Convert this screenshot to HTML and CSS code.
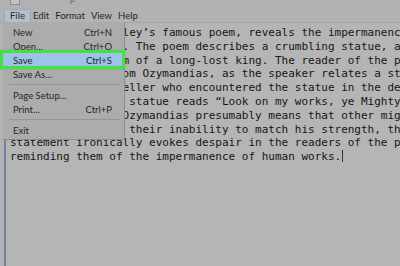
FILE: index.html
```html
<!DOCTYPE html>
<html lang="en">
<head>
    <meta charset="UTF-8">
    <title>Notepad - File menu</title>
    <link rel="stylesheet" href="styles.css">
</head>
<body>

<div class="window">
    <!-- title bar (mostly cropped) -->
    <div class="titlebar">
        <span class="app-icon"></span>
        <span class="title-text">p</span>
    </div>

    <!-- menu bar -->
    <nav class="menubar">
        <span class="menu-item active">File</span>
        <span class="menu-item">Edit</span>
        <span class="menu-item">Format</span>
        <span class="menu-item">View</span>
        <span class="menu-item">Help</span>
    </nav>

    <!-- editor -->
    <div class="editor">
<pre class="doc">Percy Bysshe Shelley’s famous poem, reveals the impermanence of
of power and fame. The poem describes a crumbling statue, a relic
carved in the form of a long-lost king. The reader of the poem
learns of this from Ozymandias, as the speaker relates a story
story from a traveller who encountered the statue in the desert.
sert. This broken statue reads “Look on my works, ye Mighty, and
and despair!” So Ozymandias presumably means that other mighty
hty kings weep at their inability to match his strength, though this
statement ironically evokes despair in the readers of the poem,
reminding them of the impermanence of human works.<span class="caret"></span></pre>
    </div>

    <!-- open dropdown -->
    <div class="dropdown">
        <div class="dd-item"><span>New</span><span>Ctrl+N</span></div>
        <div class="dd-item"><span>Open...</span><span>Ctrl+O</span></div>
        <div class="dd-item selected"><span>Save</span><span>Ctrl+S</span></div>
        <div class="dd-item"><span>Save As...</span><span></span></div>
        <div class="dd-sep"></div>
        <div class="dd-item"><span>Page Setup...</span><span></span></div>
        <div class="dd-item"><span>Print...</span><span>Ctrl+P</span></div>
        <div class="dd-sep"></div>
        <div class="dd-item"><span>Exit</span><span></span></div>
    </div>
</div>

</body>
</html>
```

FILE: styles.css
```css
/* --- base --- */
:root {
    --bg-color: #b3b3b3;
    --editor-bg: #b5b5b5;
    --menu-bg: #acacac;
    --text-color: #161616;
    --menu-text: #262626;
}

body {
    margin: 0;
    width: 400px;
    height: 266px;
    overflow: hidden;
    background-color: var(--bg-color);
    font-family: Lato, "Open Sans", sans-serif;
}

.window {
    position: relative;
    height: 266px;
    display: flex;
    flex-direction: column;
}

/* --- title bar --- */
.titlebar {
    height: 9px;
    display: flex;
    align-items: flex-start;
    background-color: #b1b1b1;
    overflow: hidden;
}
.app-icon {
    width: 8px;
    height: 4px;
    margin-left: 10px;
    border: 1px solid #8c8c8c;
    border-top: none;
    background-color: #c2c2c2;
}
.title-text {
    margin: -6px 0 0 50px;
    font-size: 9px;
    line-height: 10px;
    color: #666;
}

/* --- menu bar --- */
.menubar {
    height: 13px;
    display: flex;
    align-items: center;
    padding-left: 4px;
    font-size: 9.5px;
    color: var(--menu-text);
    background-color: #b2b2b2;
    border-bottom: 1px solid #a4a4a4;
}
.menu-item {
    padding: 0 3px;
    line-height: 12px;
}
.menu-item.active {
    padding: 0 5px;
    margin-right: -1px;
    background-color: #b3c0cc;
    border: 1px solid #97aabc;
}

/* --- editor --- */
.editor {
    flex: 1;
    margin-left: 4px;
    border-left: 2px solid #71849b;
    background-color: var(--editor-bg);
    padding: 3px 0 0 4px;
    overflow: hidden;
}
.doc {
    margin: 0;
    font-family: "DejaVu Sans Mono", "Liberation Mono", monospace;
    font-size: 11px;
    line-height: 13.8px;
    color: var(--text-color);
    white-space: pre;
}
.caret {
    display: inline-block;
    width: 1px;
    height: 12px;
    margin-left: 1px;
    vertical-align: -2px;
    background-color: #333;
}

/* --- dropdown menu (lies over the editor) --- */
.dropdown {
    position: absolute;
    top: 22px;
    left: 3px;
    width: 121px;
    padding: 3px 0 2px;
    background-color: var(--menu-bg);
    border-right: 1px solid #8e8e8e;
    border-bottom: 1px solid #8e8e8e;
    font-size: 9.5px;
    color: var(--menu-text);
}
.dd-item {
    height: 14px;
    display: flex;
    align-items: center;
    justify-content: space-between;
    padding: 0 12px 0 10px;
}
.dd-item.selected {
    position: relative;
}
.dd-item.selected span {
    position: relative;
}
.dd-item.selected::before {
    content: "";
    position: absolute;
    top: -3px;
    bottom: -2px;
    left: -3px;
    right: -1px;
    background-color: #9fc3e6;
    border: 3px solid #45e043;
    box-shadow: 0 0 1px #3cc03a;
}
.dd-sep {
    height: 1px;
    margin: 3px 4px 3px 6px;
    background-color: #969696;
}
```
